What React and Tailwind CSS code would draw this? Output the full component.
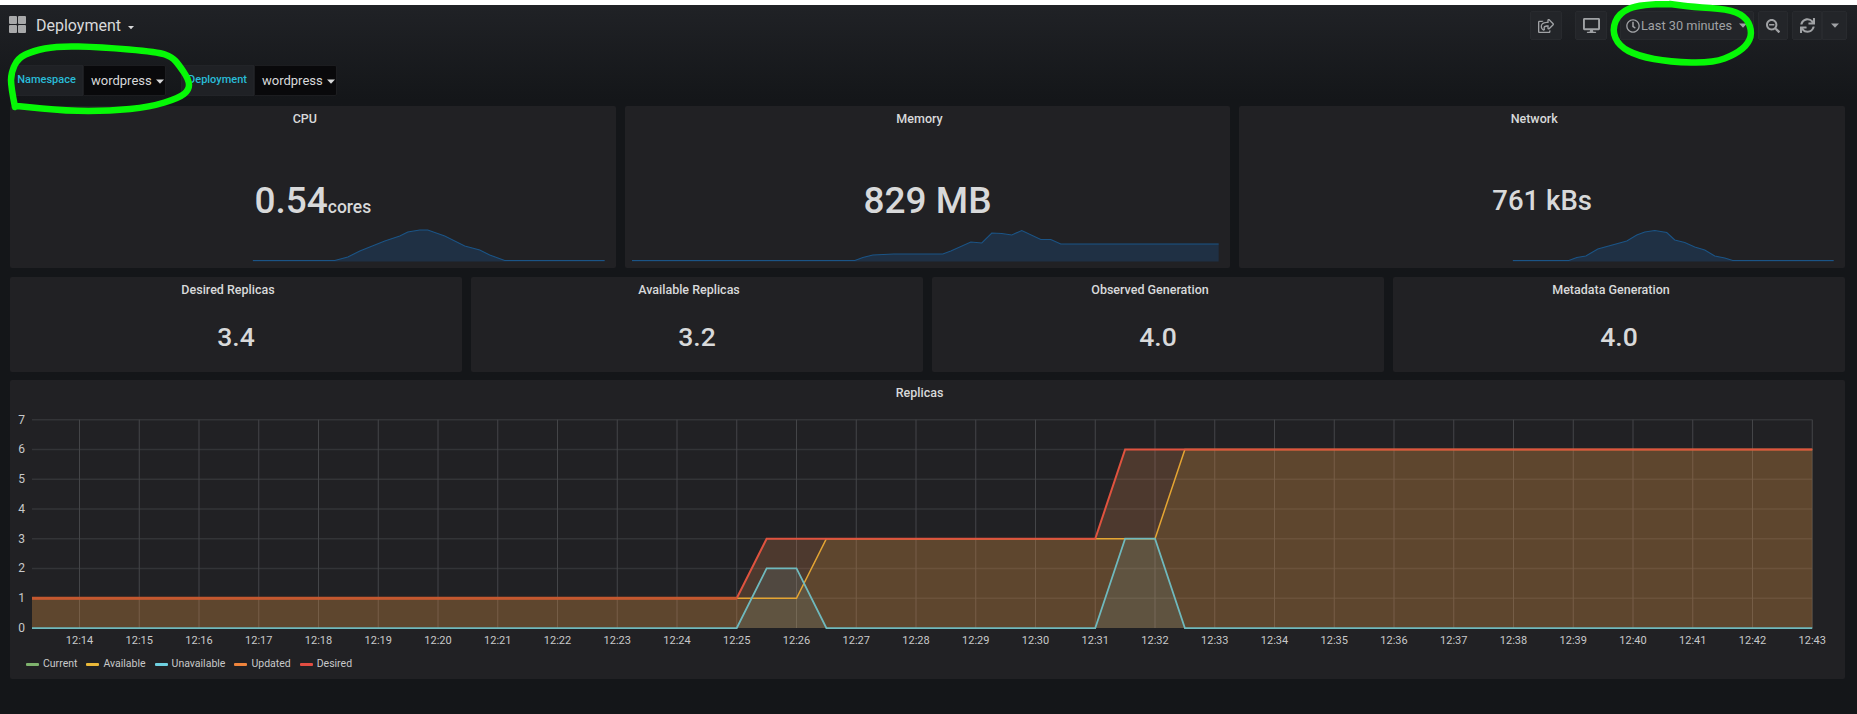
import { FaRegShareSquare, FaDesktop, FaRegClock, FaSearchMinus, FaSync } from "react-icons/fa";

// chart scales, in page pixels
const xAt = (min) => 79.5 + (min - 14) * 59.75;
const yAt = (v) => 628 - v * 29.76;
const LEFT = 32;
const RIGHT = xAt(43);

const line = (pts) => pts.map(([x, y], i) => `${i ? "L" : "M"}${x} ${y}`).join(" ");
const area = (pts, base = yAt(0)) => `${line(pts)} L${pts[pts.length - 1][0]} ${base} L${pts[0][0]} ${base} Z`;
const series = (pts) => pts.map(([m, v]) => [m === "l" ? LEFT : m === "r" ? RIGHT : xAt(m), yAt(v)]);
const smooth = (pts) => {
  let d = `M${pts[0][0]} ${pts[0][1]}`;
  for (let i = 1; i < pts.length - 1; i++) {
    const mx = (pts[i][0] + pts[i + 1][0]) / 2;
    const my = (pts[i][1] + pts[i + 1][1]) / 2;
    d += ` Q${pts[i][0]} ${pts[i][1]} ${mx} ${my}`;
  }
  const last = pts[pts.length - 1];
  return `${d} L${last[0]} ${last[1]}`;
};

const desired = series([["l", 1], [25, 1], [25.5, 3], [31, 3], [31.5, 6], ["r", 6]]);
const available = series([["l", 1], [26, 1], [26.5, 3], [32, 3], [32.5, 6], ["r", 6]]);
const unavailable = series([["l", 0], [25, 0], [25.5, 2], [26, 2], [26.5, 0], [31, 0], [31.5, 3], [32, 3], [32.5, 0], ["r", 0]]);

const minutes = Array.from({ length: 30 }, (_, i) => 14 + i);

const cpuSpark = [[253, 260.5], [335, 260.5], [348, 257], [360, 251], [385, 241], [400, 236], [408, 232], [420, 230], [428, 230], [445, 236], [465, 246], [480, 250], [490, 255], [505, 260.5], [605, 260.5]];
const memSpark = [[632, 260.5], [855, 260.5], [863, 257.5], [873, 255], [894, 254], [943, 254], [951, 251], [971, 242], [982, 243], [992, 233], [1002, 233.5], [1012, 235], [1022, 230.5], [1041, 239.5], [1051, 239.5], [1061, 244], [1219, 244]];
const netSpark = [[1513, 260.5], [1569, 260.5], [1577, 257.5], [1586, 256], [1598, 249], [1627, 241], [1637, 235], [1645, 232], [1655, 230.5], [1667, 232.5], [1675, 240], [1685, 242.5], [1695, 247], [1705, 250], [1715, 256], [1725, 258], [1733, 260.5], [1834, 260.5]];

const Caret = ({ className = "" }) => (
  <svg width="8" height="5" viewBox="0 0 8 5" className={`shrink-0 ${className}`}>
    <path d="M0 0.5h8L4 4.8z" fill="currentColor" />
  </svg>
);

const ToolButton = ({ children, className = "" }) => (
  <div className={`h-[29px] flex items-center justify-center bg-[#232529] border border-[#282a2e] rounded-[2px] text-[#a0a2a5] ${className}`}>
    {children}
  </div>
);

const Variable = ({ label, value }) => (
  <div className="flex h-[31px]">
    <div className="h-full flex items-center justify-center w-[73px] bg-[#1f2125] border border-[#222428] text-[11px] font-medium text-[#29bcd8]">
      {label}
    </div>
    <div className="h-full w-[83px] flex items-center pl-[7px] pt-[1px] gap-[4px] bg-[#09090b] border border-[#1c1d20] rounded-r-[2px] text-[13px] text-[#d8d9da]">
      {value}
      <Caret />
    </div>
  </div>
);

const PanelTitle = ({ children }) => (
  <div className="h-[26px] pr-[16px] flex items-center justify-center text-[12.5px] font-medium text-[#d8d9da]">{children}</div>
);

const Spark = ({ pts, viewBox }) => (
  <svg viewBox={viewBox} preserveAspectRatio="none" className="w-full h-[36px] mt-[3px]">
    <path d={area(pts, 261.5)} fill="#1f3044" />
    <path d={line(pts)} fill="none" stroke="#1b5486" strokeWidth="1.1" />
  </svg>
);

const BigStat = ({ title, sizeClass, children, pts, viewBox }) => (
  <div className="bg-[#212124] rounded-[2px] h-[162px] flex flex-col">
    <PanelTitle>{title}</PanelTitle>
    <div className={`mt-[47px] h-[44px] flex items-baseline justify-center leading-[44px] font-medium text-[#d8d9da] ${sizeClass}`}>
      {children}
    </div>
    <Spark pts={pts} viewBox={viewBox} />
  </div>
);

const SmallStat = ({ title, value }) => (
  <div className="bg-[#212124] rounded-[2px] h-[95px] flex flex-col">
    <PanelTitle>{title}</PanelTitle>
    <div className="mt-[16px] h-[36px] leading-[36px] text-center text-[26.5px] font-medium text-[#d8d9da]">{value}</div>
  </div>
);

const LegendItem = ({ color, label }) => (
  <div className="flex items-center gap-[4px]">
    <span className={`w-[13px] h-[3px] rounded-[1px] ${color}`} />
    <span>{label}</span>
  </div>
);

const Annotations = () => (
  <svg className="absolute inset-0 pointer-events-none" width="1857" height="714" viewBox="0 0 1857 714">
    <path
      d={smooth([[15, 107], [11, 87], [11, 73], [18, 58], [33, 51], [57, 46], [100, 47], [158, 52], [172, 57], [179, 65], [189, 80], [189, 90], [179, 98], [150, 107], [110, 111], [67, 111], [17, 106]])}
      fill="none" stroke="#06f806" strokeWidth="6.5" strokeLinecap="round" strokeLinejoin="round"
    />
    <path
      d={smooth([[1670, 4], [1640, 4], [1619, 13], [1612, 30], [1619, 46], [1638, 56], [1670, 62], [1713, 63], [1736, 54], [1749, 43], [1752, 30], [1745, 16], [1727, 9], [1693, 7], [1670, 4]])}
      fill="none" stroke="#06f806" strokeWidth="6.5" strokeLinecap="round" strokeLinejoin="round"
    />
  </svg>
);

const App = () => {
  return (
    <div className="relative w-full h-[714px] overflow-hidden bg-gradient-to-b from-[#202226] from-[5px] via-[#141619] via-[100px] to-[#141619] font-['Roboto',sans-serif] text-[#d8d9da]">
      <div className="h-[5px] bg-white" />

      {/* Top bar */}
      <div className="flex justify-between pl-[9px] pr-[10px] pt-[6px] h-[60px]">
        <div className="flex items-start h-[29px]">
          <svg width="17" height="17" viewBox="0 0 17 17" className="mt-[5px]">
            <rect x="0" y="0" width="8" height="8" rx="1" fill="#a8a9aa" />
            <rect x="9" y="0" width="8" height="8" rx="1" fill="#a8a9aa" />
            <rect x="0" y="9" width="8" height="8" rx="1" fill="#a8a9aa" />
            <rect x="9" y="9" width="8" height="8" rx="1" fill="#a8a9aa" />
          </svg>
          <span className="ml-[10px] text-[16px] leading-[30px] text-[#d8d9da]">Deployment</span>
          <Caret className="ml-[6px] mt-[14px] scale-75" />
        </div>
        <div className="flex items-start">
          <ToolButton className="w-[32px]"><FaRegShareSquare size={16} /></ToolButton>
          <ToolButton className="w-[32px] ml-[13px]"><FaDesktop size={17} /></ToolButton>
          <ToolButton className="w-[134px] ml-[13px] text-[12.75px] justify-start pl-[5px]">
            <FaRegClock size={14} />
            <span className="ml-[1px]">Last 30 minutes</span>
            <Caret className="ml-[7px]" />
          </ToolButton>
          <ToolButton className="w-[30px] ml-[4px]"><FaSearchMinus size={14} /></ToolButton>
          <ToolButton className="w-[30px] ml-[4px] rounded-r-none"><FaSync size={15} /></ToolButton>
          <ToolButton className="w-[25px] rounded-l-none"><Caret /></ToolButton>
        </div>
      </div>

      {/* Template variables */}
      <div className="flex pl-[10px] gap-[15px] mb-[10px]">
        <Variable label="Namespace" value="wordpress" />
        <Variable label="Deployment" value="wordpress" />
      </div>

      <div className="pl-[10px] pr-[12px] flex flex-col">
        <div className="grid grid-cols-3 gap-[9px]">
          <BigStat title="CPU" sizeClass="text-[37px]" pts={cpuSpark} viewBox="10 226 606 36">
            0.54<span className="text-[17.5px]">cores</span>
          </BigStat>
          <BigStat title="Memory" sizeClass="text-[37px]" pts={memSpark} viewBox="625 226 606 36">
            829 MB
          </BigStat>
          <BigStat title="Network" sizeClass="text-[27.5px]" pts={netSpark} viewBox="1239 226 606 36">
            761 kBs
          </BigStat>
        </div>

        <div className="grid grid-cols-4 gap-[9px] mt-[9px]">
          <SmallStat title="Desired Replicas" value="3.4" />
          <SmallStat title="Available Replicas" value="3.2" />
          <SmallStat title="Observed Generation" value="4.0" />
          <SmallStat title="Metadata Generation" value="4.0" />
        </div>

        {/* Replicas graph */}
        <div className="bg-[#212124] rounded-[2px] h-[299px] mt-[8px] flex flex-col">
          <div className="mb-[4px]"><PanelTitle>Replicas</PanelTitle></div>
          <svg viewBox="10 410 1835 240" className="w-full h-[240px]">
            {[1, 2, 3, 4, 5, 6, 7].map((v) => (
              <line key={v} x1={LEFT} x2={RIGHT} y1={yAt(v)} y2={yAt(v)} stroke="#333437" strokeWidth="1.5" />
            ))}
            {minutes.map((m) => (
              <line key={m} x1={xAt(m)} x2={xAt(m)} y1={yAt(7)} y2={yAt(0)} stroke="#444548" strokeWidth="1" />
            ))}

            <path d={area(desired)} fill="#7eb26d" fillOpacity="0.1" />
            <path d={area(desired)} fill="#ef843c" fillOpacity="0.1" />
            <path d={area(desired)} fill="#e24d42" fillOpacity="0.1" />
            <path d={area(available)} fill="#eab839" fillOpacity="0.11" />
            <path d={area(unavailable)} fill="#6ed0e0" fillOpacity="0.1" />

            <path d={line(available)} fill="none" stroke="#e5a533" strokeWidth="1.5" />
            <path d={line(desired)} fill="none" stroke="#e0533f" strokeWidth="2" />
            <line x1={LEFT} x2={xAt(25)} y1={yAt(1)} y2={yAt(1)} stroke="#c4582f" strokeWidth="3" />
            <path d={line(unavailable)} fill="none" stroke="#6fb9bd" strokeWidth="1.75" />

            <g fill="#c8c9ca" fontSize="12" textAnchor="end">
              {[0, 1, 2, 3, 4, 5, 6, 7].map((v) => (
                <text key={v} x="25" y={yAt(v) + 4}>{v}</text>
              ))}
            </g>
            <g fill="#c8c9ca" fontSize="11" textAnchor="middle">
              {minutes.map((m) => (
                <text key={m} x={xAt(m)} y="644">{`12:${m}`}</text>
              ))}
            </g>
          </svg>
          <div className="h-[28px] pl-[16px] flex items-center gap-[9px] text-[10.5px] text-[#c8c9ca]">
            <LegendItem color="bg-[#7eb26d]" label="Current" />
            <LegendItem color="bg-[#eab839]" label="Available" />
            <LegendItem color="bg-[#6ed0e0]" label="Unavailable" />
            <LegendItem color="bg-[#ef843c]" label="Updated" />
            <LegendItem color="bg-[#e24d42]" label="Desired" />
          </div>
        </div>
      </div>

      <Annotations />
    </div>
  );
};

export default App;
